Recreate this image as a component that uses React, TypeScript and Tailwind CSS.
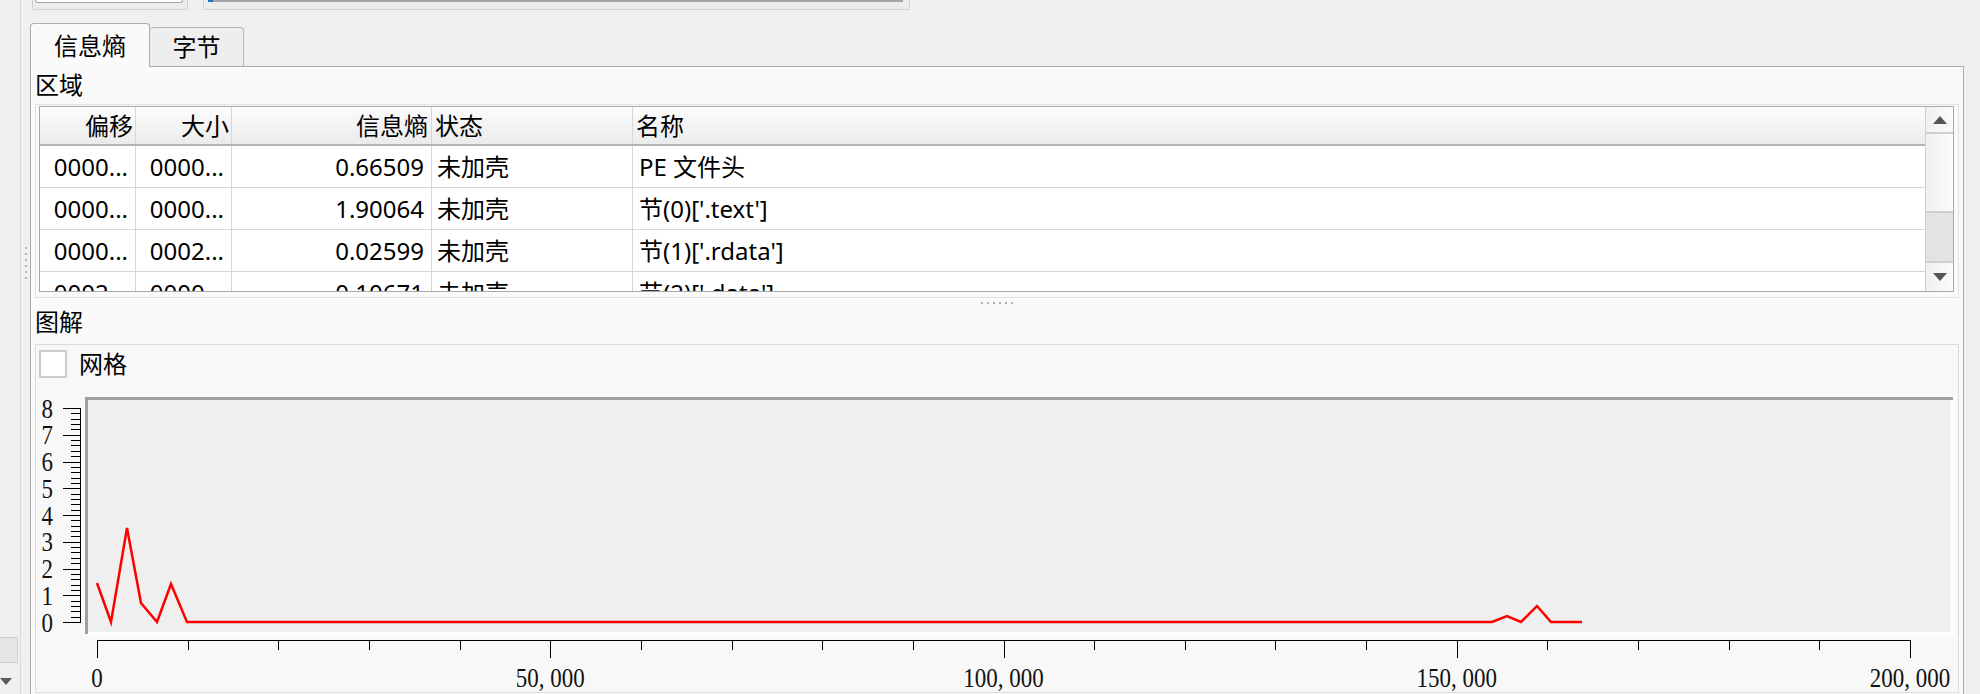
import { Fragment } from 'react';

const rows = [
  { off: '0000...', size: '0000...', ent: '0.66509', state: '未加壳', name: 'PE 文件头' },
  { off: '0000...', size: '0000...', ent: '1.90064', state: '未加壳', name: "节(0)['.text']" },
  { off: '0000...', size: '0002...', ent: '0.02599', state: '未加壳', name: "节(1)['.rdata']" },
  { off: '0002...', size: '0000...', ent: '0.10671', state: '未加壳', name: "节(2)['.data']" },
];

// chart geometry, in page pixels
const Y0 = 622;
const YU = 26.75;
const X0 = 97;
const XU = 90.65; // per 10,000 bytes

const points: [number, number][] = [
  [97, 583], [111, 622], [127, 528], [141, 603], [157, 622], [171, 584], [187, 622],
  [1492, 622], [1507, 616], [1521, 622], [1537, 606], [1551, 622], [1582, 622],
];

const Dots = ({ vertical }: { vertical?: boolean }) => (
  <div className={vertical ? 'flex flex-col gap-[4px]' : 'flex gap-[4px]'}>
    {[0, 1, 2, 3, 4, 5].map((i) => (
      <div key={i} className="w-[2px] h-[2px] bg-[#b4b4b4]" />
    ))}
  </div>
);

// narrow serif like the original axis font
const AxisText = ({ x, y, anchor, children }: { x: number; y: number; anchor: 'end' | 'middle'; children: React.ReactNode }) => (
  <text
    transform={`translate(${x},${y}) scale(0.82,1)`}
    textAnchor={anchor}
    fontFamily="'Liberation Serif', serif"
    fontSize={28}
    fill="#111"
  >
    {children}
  </text>
);

const Chart = () => {
  const minorY = Array.from({ length: 41 }, (_, i) => Y0 - (i * YU) / 5);
  const xTicks = Array.from({ length: 21 }, (_, i) => i);
  const labels = ['0', '50', '100', '150', '200'];

  return (
    <svg width={1922} height={307} viewBox="36 385 1922 307" className="block">
      {/* plot frame: sunken look */}
      <rect x={85} y={397} width={1870} height={239} fill="#fdfdfd" />
      <rect x={85} y={397} width={1868} height={3} fill="#a0a0a0" />
      <rect x={85} y={397} width={3} height={237} fill="#a0a0a0" />
      <rect x={88} y={400} width={1863} height={232} fill="#efefef" />

      {/* y axis */}
      <line x1={80.5} y1={408} x2={80.5} y2={623} stroke="#000" strokeWidth={1} />
      {minorY.map((y, i) => (
        <line
          key={i}
          x1={i % 5 === 0 ? 63 : 71}
          y1={Math.round(y) + 0.5}
          x2={81}
          y2={Math.round(y) + 0.5}
          stroke="#000"
          strokeWidth={1}
        />
      ))}
      {[0, 1, 2, 3, 4, 5, 6, 7, 8].map((v) => (
        <AxisText key={v} x={53} y={Y0 - v * YU + 9.5} anchor="end">
          {v}
        </AxisText>
      ))}

      {/* x axis */}
      <line x1={97} y1={640.5} x2={1911} y2={640.5} stroke="#000" strokeWidth={1} />
      {xTicks.map((i) => {
        const x = Math.round(X0 + i * XU) + 0.5;
        return (
          <line key={i} x1={x} y1={640} x2={x} y2={i % 5 === 0 ? 658 : 650} stroke="#000" strokeWidth={1} />
        );
      })}
      {labels.map((l, i) => (
        <AxisText key={l} x={X0 + i * 5 * XU} y={687} anchor="middle">
          {i === 0 ? (
            '0'
          ) : (
            <Fragment>
              <tspan>{l},</tspan>
              <tspan dx={7}>000</tspan>
            </Fragment>
          )}
        </AxisText>
      ))}

      {/* entropy line */}
      <polyline
        points={points.map((p) => p.join(',')).join(' ')}
        fill="none"
        stroke="#ff0000"
        strokeWidth={2.5}
        strokeLinejoin="miter"
      />
    </svg>
  );
};

const Table = () => {
  const cell = 'h-full flex items-center border-r border-[#d6d6d6] shrink-0';
  return (
    <div className="h-full border border-[#a9a9a9] flex bg-white overflow-hidden">
      <div className="flex-1 flex flex-col overflow-hidden">
        <div className="h-[39px] shrink-0 flex border-b-2 border-[#b3b3b3] bg-gradient-to-b from-[#fcfcfc] to-[#ebebeb]">
          <div className={`${cell} w-[96px] justify-end pr-[2px]`}>偏移</div>
          <div className={`${cell} w-[96px] justify-end pr-[2px]`}>大小</div>
          <div className={`${cell} w-[200px] justify-end pr-[3px]`}>信息熵</div>
          <div className={`${cell} w-[201px] pl-[3px]`}>状态</div>
          <div className="h-full flex items-center flex-1 pl-[3px]">名称</div>
        </div>
        {rows.map((r, i) => (
          <div key={i} className="h-[42px] shrink-0 flex border-b border-[#d6d6d6]">
            <div className={`${cell} w-[96px] justify-end pr-[7px]`}>{r.off}</div>
            <div className={`${cell} w-[96px] justify-end pr-[7px]`}>{r.size}</div>
            <div className={`${cell} w-[200px] justify-end pr-[7px]`}>{r.ent}</div>
            <div className={`${cell} w-[201px] pl-[5px]`}>{r.state}</div>
            <div className="h-full flex items-center flex-1 pl-[6px]">{r.name}</div>
          </div>
        ))}
      </div>
      {/* scrollbar */}
      <div className="w-[28px] shrink-0 flex flex-col border-l border-[#d0d0d0] bg-gradient-to-r from-[#f0f0f0] to-[#fbfbfb]">
        <div className="h-[27px] shrink-0 flex items-center justify-center border-b-2 border-[#cfcfcf]">
          <div className="w-0 h-0 border-x-[7px] border-x-transparent border-b-[8px] border-b-[#555]" />
        </div>
        <div className="h-[77px] shrink-0" />
        <div className="h-[52px] shrink-0 bg-[#e3e3e3] border-y-2 border-[#cfcfcf]" />
        <div className="flex-1 flex items-center justify-center">
          <div className="w-0 h-0 border-x-[7px] border-x-transparent border-t-[8px] border-t-[#555]" />
        </div>
      </div>
    </div>
  );
};

export default function App() {
  return (
    <div className="w-[1980px] h-[694px] overflow-hidden flex bg-[#f0f0f0] text-[24px] leading-[24px] text-black font-['Noto_Sans','Noto_Sans_CJK_SC',sans-serif]">
      {/* left strip */}
      <div className="w-[21px] shrink-0 border-r border-[#d9d9d9] flex flex-col">
        <div className="mt-auto h-[26px] w-[18px] bg-[#e6e6e6] border-y border-r border-[#cfcfcf]" />
        <div className="mt-[15px] mb-[9px] w-0 h-0 border-x-[6px] border-x-transparent border-t-[7px] border-t-[#5a5a5a]" />
      </div>
      <div className="w-[9px] shrink-0 pt-[247px] pl-[4px]">
        <Dots vertical />
      </div>

      {/* main column */}
      <div className="w-[1934px] shrink-0 flex flex-col">
        {/* clipped widgets at the top */}
        <div className="h-[10px] shrink-0 flex">
          <div className="ml-[2px] w-[156px] h-[10px] border-x border-b border-[#d2d2d2] rounded-b-[3px] bg-[#ececec]">
            <div className="ml-[2px] w-[148px] h-[3px] border-x border-b border-[#a5a5a5] rounded-b-[3px] bg-[#fdfdfd]" />
          </div>
          <div className="ml-[15px] w-[707px] h-[10px] border-x border-b border-[#d2d2d2] rounded-b-[2px] bg-[#ececec]">
            <div className="ml-[4px] w-[695px] h-[2px] bg-[#a6a6a6] flex">
              <div className="w-[5px] h-full bg-[#1f6fc5]" />
            </div>
          </div>
        </div>

        {/* tabs */}
        <div className="mt-[13px] h-[43px] shrink-0 flex items-start relative z-10">
          <div className="w-[120px] h-[44px] bg-[#fafafa] border-x border-t border-[#adadad] rounded-t-[4px] flex items-center justify-center">
            信息熵
          </div>
          <div className="mt-[4px] w-[94px] h-[39px] bg-[#eeeeee] border-r border-t border-[#b5b5b5] rounded-t-[4px] flex items-center justify-center">
            字节
          </div>
        </div>

        {/* tab pane */}
        <div className="flex-1 bg-[#fafafa] border-x border-t border-[#adadad] px-[4px] flex flex-col">
          <div className="h-[37px] shrink-0 pt-[6px]">区域</div>
          <div className="h-[194px] shrink-0 border border-[#e2e2e2] pl-[3px] pt-[1px] pr-[4px] pb-[5px]">
            <Table />
          </div>
          <div className="h-[10px] shrink-0 flex justify-center pt-[4px]">
            <Dots />
          </div>
          <div className="h-[36px] shrink-0 pt-[2px]">图解</div>
          <div className="h-[349px] shrink-0 border border-[#dcdcdc] bg-[#f8f8f8] flex flex-col">
            <div className="h-[33px] shrink-0 pt-[5px] pl-[3px] flex items-start">
              <div className="w-[28px] h-[28px] bg-white border-2 border-[#cbcbcb]" />
              <div className="ml-[12px] h-[28px] flex items-center">网格</div>
            </div>
            <div className="mt-[7px]">
              <Chart />
            </div>
          </div>
        </div>
      </div>
    </div>
  );
}
